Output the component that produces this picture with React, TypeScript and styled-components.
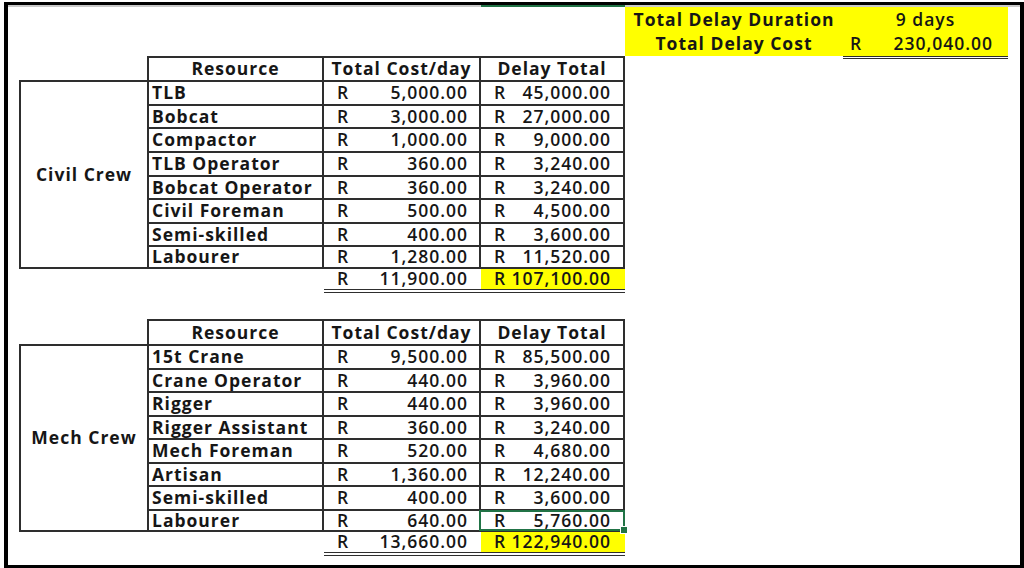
import React from 'react';
import styled, { createGlobalStyle, css } from 'styled-components';

const GlobalStyle = createGlobalStyle`
  html, body { margin: 0; padding: 0; background: #fff; }
  body { font-family: "Open Sans", "Liberation Sans", sans-serif; }
  * { box-sizing: border-box; }
`;

const LINE = '#2e2e2e';
const YELLOW = '#ffff00';
const EXCEL_GREEN = '#217346';

type Place = { $col: number | string; $row: number; $rowSpan?: number };

const placed = css<Place>`
  grid-column: ${(p) => p.$col};
  grid-row: ${(p) => p.$row} / span ${(p) => p.$rowSpan ?? 1};
`;

const strong = css`
  font-weight: 700;
  letter-spacing: 1px;
`;

const Frame = styled.div`
  margin: 2px 0 0 4px;
  width: 1020px;
  height: 566px;
  border-style: solid;
  border-color: #000;
  border-width: 3px 4px 3px 4px;
  background: #fff;
  overflow: hidden;
`;

const Sheet = styled.div`
  display: grid;
  height: 100%;
  grid-template-columns: 11px 128px 177px 157px 144px 218px 165px 1fr;
  grid-template-rows:
    2px 25px 24px 24px repeat(8, 23.625px) 24px 26px 25px
    repeat(8, 23.5px) 24px 1fr;
  font-size: 17.5px;
  font-weight: 600;
  letter-spacing: 1px;
  color: #161616;
`;

const GridLine = styled.div<Place & { $accent?: boolean }>`
  ${placed};
  background: ${(p) => (p.$accent ? EXCEL_GREEN : '#c9c9c9')};
`;

const Cell = styled.div<Place>`
  ${placed};
  display: flex;
  align-items: center;
  min-width: 0;
  white-space: nowrap;
  line-height: 1;
`;

const HeaderCell = styled(Cell)<{ $first?: boolean }>`
  ${strong};
  justify-content: center;
  border-top: 2px solid ${LINE};
  border-right: 2px solid ${LINE};
  border-left: ${(p) => (p.$first ? `2px solid ${LINE}` : 'none')};
`;

const GroupCell = styled(Cell)`
  ${strong};
  justify-content: center;
  border-top: 2px solid ${LINE};
  border-left: 2px solid ${LINE};
  border-bottom: 2px solid ${LINE};
`;

const NameCell = styled(Cell)<{ $last?: boolean }>`
  ${strong};
  padding-left: 3px;
  border-top: 2px solid ${LINE};
  border-left: 2px solid ${LINE};
  border-right: 2px solid ${LINE};
  border-bottom: ${(p) => (p.$last ? `2px solid ${LINE}` : 'none')};
`;

type Kind = 'cost' | 'delay';

const MoneyCell = styled(Cell)<{ $last?: boolean; $kind: Kind }>`
  position: relative;
  justify-content: space-between;
  padding: ${(p) => (p.$kind === 'cost' ? '0 11px 0 13px' : '0 12px 0 13px')};
  border-top: 2px solid ${LINE};
  border-right: 2px solid ${LINE};
  border-bottom: ${(p) => (p.$last ? `2px solid ${LINE}` : 'none')};
`;

const TotalCell = styled(Cell)<{ $highlight?: boolean; $kind: Kind }>`
  justify-content: space-between;
  padding: ${(p) => (p.$kind === 'cost' ? '0 13px 0 13px' : '0 14px 0 13px')};
  border-bottom: 4px double ${LINE};
  background: ${(p) => (p.$highlight ? YELLOW : 'transparent')};
  background-clip: padding-box;
`;

const SummaryCell = styled(Cell)<{ $bold?: boolean }>`
  justify-content: center;
  background: ${YELLOW};
  ${(p) => p.$bold && strong};
`;

const SummaryAmount = styled(Cell)`
  align-self: start;
  height: 27px;
  justify-content: space-between;
  padding: 0 15px 0 7px;
  background: ${YELLOW};
  background-clip: padding-box;
  border-bottom: 3px double ${LINE};
`;

const Selection = styled.span`
  position: absolute;
  top: -1px;
  left: -2px;
  right: -2px;
  bottom: -1px;
  border: 2px solid ${EXCEL_GREEN};
  pointer-events: none;

  &::after {
    content: '';
    position: absolute;
    right: -5px;
    bottom: -5px;
    width: 6px;
    height: 6px;
    background: ${EXCEL_GREEN};
    border: 1px solid #fff;
  }
`;

type Row = [string, string, string];

const civilRows: Row[] = [
  ['TLB', '5,000.00', '45,000.00'],
  ['Bobcat', '3,000.00', '27,000.00'],
  ['Compactor', '1,000.00', '9,000.00'],
  ['TLB Operator', '360.00', '3,240.00'],
  ['Bobcat Operator', '360.00', '3,240.00'],
  ['Civil Foreman', '500.00', '4,500.00'],
  ['Semi-skilled', '400.00', '3,600.00'],
  ['Labourer', '1,280.00', '11,520.00'],
];

const mechRows: Row[] = [
  ['15t Crane', '9,500.00', '85,500.00'],
  ['Crane Operator', '440.00', '3,960.00'],
  ['Rigger', '440.00', '3,960.00'],
  ['Rigger Assistant', '360.00', '3,240.00'],
  ['Mech Foreman', '520.00', '4,680.00'],
  ['Artisan', '1,360.00', '12,240.00'],
  ['Semi-skilled', '400.00', '3,600.00'],
  ['Labourer', '640.00', '5,760.00'],
];

type CrewProps = {
  start: number;
  crew: string;
  rows: Row[];
  totalCost: string;
  totalDelay: string;
  selected?: number;
};

function CrewTable({ start, crew, rows, totalCost, totalDelay, selected }: CrewProps) {
  const body = start + 1;
  const totalRow = body + rows.length;
  return (
    <>
      <HeaderCell $col={3} $row={start} $first>
        Resource
      </HeaderCell>
      <HeaderCell $col={4} $row={start}>
        Total Cost/day
      </HeaderCell>
      <HeaderCell $col={5} $row={start}>
        Delay Total
      </HeaderCell>
      <GroupCell $col={2} $row={body} $rowSpan={rows.length}>
        {crew}
      </GroupCell>
      {rows.map(([name, cost, delay], i) => {
        const last = i === rows.length - 1;
        return (
          <React.Fragment key={name + i}>
            <NameCell $col={3} $row={body + i} $last={last}>
              {name}
            </NameCell>
            <MoneyCell $col={4} $row={body + i} $last={last} $kind="cost">
              <span>R</span>
              <span>{cost}</span>
            </MoneyCell>
            <MoneyCell $col={5} $row={body + i} $last={last} $kind="delay">
              <span>R</span>
              <span>{delay}</span>
              {selected === i && <Selection />}
            </MoneyCell>
          </React.Fragment>
        );
      })}
      <TotalCell $col={4} $row={totalRow} $kind="cost">
        <span>R</span>
        <span>{totalCost}</span>
      </TotalCell>
      <TotalCell $col={5} $row={totalRow} $kind="delay" $highlight>
        <span>R</span>
        <span>{totalDelay}</span>
      </TotalCell>
    </>
  );
}

export default function App() {
  return (
    <>
      <GlobalStyle />
      <Frame>
        <Sheet>
          <GridLine $col="1 / -1" $row={1} />
          <GridLine $col={5} $row={1} $accent />

          <SummaryCell $col={6} $row={2} $bold>
            Total Delay Duration
          </SummaryCell>
          <SummaryCell $col={7} $row={2}>
            9 days
          </SummaryCell>
          <SummaryCell $col={6} $row={3} $bold>
            Total Delay Cost
          </SummaryCell>
          <SummaryAmount $col={7} $row={3}>
            <span>R</span>
            <span>230,040.00</span>
          </SummaryAmount>

          <CrewTable
            start={4}
            crew="Civil Crew"
            rows={civilRows}
            totalCost="11,900.00"
            totalDelay="107,100.00"
          />
          <CrewTable
            start={15}
            crew="Mech Crew"
            rows={mechRows}
            totalCost="13,660.00"
            totalDelay="122,940.00"
            selected={7}
          />
        </Sheet>
      </Frame>
    </>
  );
}
